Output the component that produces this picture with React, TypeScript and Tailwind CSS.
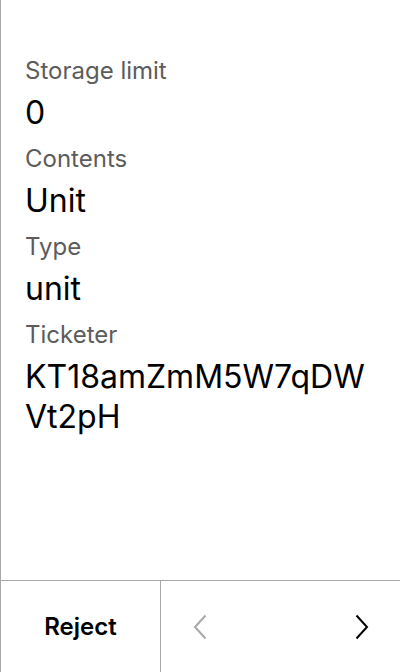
const fields = [
  { label: "Storage limit", value: "0" },
  { label: "Contents", value: "Unit" },
  { label: "Type", value: "unit" },
  { label: "Ticketer", value: "KT18amZmM5W7qDWVt2pH" },
];

const Chevron = ({ dir, className }: { dir: "left" | "right"; className: string }) => (
  <svg width="14" height="26" viewBox="0 0 14 26" fill="none" className={className}>
    <path
      d={dir === "left" ? "M12.5 1.5 L2 13 L12.5 24.5" : "M1.5 1.5 L12 13 L1.5 24.5"}
      stroke="currentColor"
      strokeWidth="2"
    />
  </svg>
);

export default function App() {
  return (
    <div
      className="h-[672px] w-[400px] flex flex-col bg-white border-l border-[#a8a8a8] text-black"
      style={{ fontFamily: "Inter, 'Noto Sans', sans-serif" }}
    >
      <div className="flex-1 pl-6 pr-6 pt-[57px]">
        {fields.map((f) => (
          <div key={f.label} className="mb-[12px]">
            <div className="text-[24px] leading-[28px] text-[#5c5c5c]">{f.label}</div>
            <div className="mt-[8px] text-[32px] leading-[40px] break-all">{f.value}</div>
          </div>
        ))}
      </div>
      <div className="h-[92px] flex border-t border-[#a8a8a8]">
        <button className="w-[160px] border-r border-[#a8a8a8] text-[24px] font-semibold">
          Reject
        </button>
        <div className="flex-1 flex items-center justify-between pl-[32px] pr-[31px]">
          <Chevron dir="left" className="text-[#a8a8a8]" />
          <Chevron dir="right" className="text-black" />
        </div>
      </div>
    </div>
  );
}
